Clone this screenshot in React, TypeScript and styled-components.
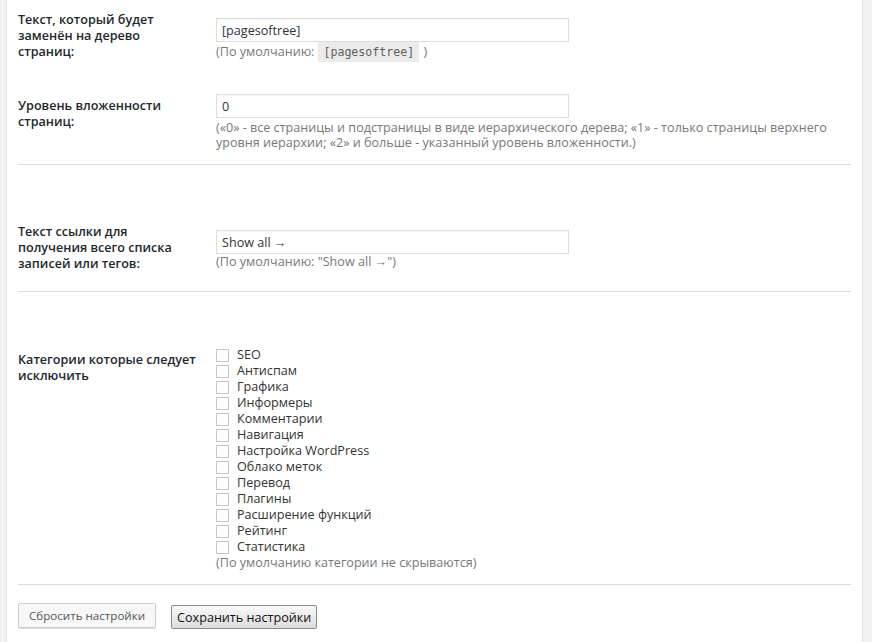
import React from "react";
import styled, { createGlobalStyle } from "styled-components";

const Global = createGlobalStyle`
  html, body {
    margin: 0;
    padding: 0;
    background: #f1f1f1;
  }
  body {
    font-family: "Open Sans", "Noto Sans", sans-serif;
    font-size: 12.6px;
    color: #444;
  }
`;

const Page = styled.div`
  display: flex;
  width: 872px;
  min-height: 642px;
  padding-left: 6px;
  box-sizing: border-box;
`;

const Panel = styled.main`
  width: 857px;
  box-sizing: border-box;
  background: #fff;
  border-left: 1px solid #e4e4e4;
  border-right: 1px solid #e4e4e4;
  padding: 0 11px;
`;

const Row = styled.div<{ $pt: number }>`
  display: grid;
  grid-template-columns: 198px 1fr;
  padding-top: ${(p) => p.$pt}px;
`;

const Label = styled.div<{ $offset?: number }>`
  margin-top: ${(p) => p.$offset ?? 0}px;
  font-weight: 600;
  font-size: 12.6px;
  line-height: 16px;
  color: #23282d;
  white-space: nowrap;
`;

const Field = styled.div<{ $offset?: number }>`
  margin-top: ${(p) => p.$offset ?? 0}px;
  display: flex;
  flex-direction: column;
  align-items: flex-start;
`;

const TextInput = styled.input`
  width: 353px;
  height: 24px;
  box-sizing: border-box;
  margin: 0;
  padding: 0 5px;
  border: 1px solid #dddddd;
  box-shadow: inset 0 1px 2px rgba(0, 0, 0, 0.04);
  font-family: "Open Sans", "Noto Sans", sans-serif;
  font-size: 12.6px;
  color: #333;
  background: #fff;
  outline: none;
`;

const Description = styled.div<{ $mt?: number }>`
  margin-top: ${(p) => p.$mt ?? 0}px;
  font-size: 12.6px;
  line-height: 15px;
  color: #787878;
  white-space: nowrap;
`;

const Code = styled.code`
  font-family: "DejaVu Sans Mono", "Liberation Mono", monospace;
  font-size: 11.6px;
  line-height: 0;
  color: #5e5e5e;
  background: #ebebeb;
  padding: 3px 5px 3px;
  margin: 0 1px 0 4px;
`;

const Divider = styled.div<{ $mt: number }>`
  margin-top: ${(p) => p.$mt}px;
  height: 1px;
  background: #dcdcdc;
`;

const CheckList = styled.div`
  display: flex;
  flex-direction: column;
`;

const CheckRow = styled.label`
  display: flex;
  align-items: center;
  height: 16px;
  line-height: 16px;
  font-size: 12.6px;
  color: #333;
`;

const Box = styled.input`
  appearance: none;
  -webkit-appearance: none;
  width: 13px;
  height: 13px;
  box-sizing: border-box;
  margin: 0 8px 0 0;
  border: 1px solid #c8c8c8;
  background: #fff;
  border-radius: 0;
`;

const Buttons = styled.div`
  display: flex;
  align-items: flex-start;
  gap: 15px;
  padding-top: 18px;
`;

const ResetButton = styled.button`
  height: 25px;
  padding: 0 10px;
  margin: 0;
  box-sizing: border-box;
  font-family: "Open Sans", "Noto Sans", sans-serif;
  font-size: 11.6px;
  color: #555;
  background: #f7f7f7;
  border: 1px solid #cccccc;
  border-radius: 2px;
  box-shadow: 0 1px 0 #dedede;
`;

const SaveButton = styled.button`
  height: 24px;
  margin: 2px 0 0;
  padding: 0 5px;
  box-sizing: border-box;
  font-family: "Open Sans", "Noto Sans", sans-serif;
  font-size: 12.6px;
  color: #111;
  background: linear-gradient(#f9f9f9, #dcdcdc);
  border: 1px solid #8a8a8a;
  border-radius: 2px;
`;

const categories = [
  "SEO",
  "Антиспам",
  "Графика",
  "Информеры",
  "Комментарии",
  "Навигация",
  "Настройка WordPress",
  "Облако меток",
  "Перевод",
  "Плагины",
  "Расширение функций",
  "Рейтинг",
  "Статистика",
];

export default function App() {
  return (
    <>
      <Global />
      <Page>
        <Panel>
          <Row $pt={12}>
            <Label>
              Текст, который будет
              <br />
              заменён на дерево
              <br />
              страниц:
            </Label>
            <Field $offset={6}>
              <TextInput defaultValue="[pagesoftree]" />
              <Description $mt={2}>
                (По умолчанию:<Code>[pagesoftree]</Code> )
              </Description>
            </Field>
          </Row>

          <Row $pt={34}>
            <Label $offset={4}>
              Уровень вложенности
              <br />
              страниц:
            </Label>
            <Field>
              <TextInput defaultValue="0" />
              <Description $mt={2}>
                («0» - все страницы и подстраницы в виде иерархического дерева; «1» - только страницы верхнего
                <br />
                уровня иерархии; «2» и больше - указанный уровень вложенности.)
              </Description>
            </Field>
          </Row>

          <Divider $mt={14} />

          <Row $pt={59}>
            <Label>
              Текст ссылки для
              <br />
              получения всего списка
              <br />
              записей или тегов:
            </Label>
            <Field $offset={6}>
              <TextInput defaultValue="Show all →" />
              <Description>(По умолчанию: "Show all →")</Description>
            </Field>
          </Row>

          <Divider $mt={19} />

          <Row $pt={55}>
            <Label $offset={5}>
              Категории которые следует
              <br />
              исключить
            </Label>
            <Field>
              <CheckList>
                {categories.map((c) => (
                  <CheckRow key={c}>
                    <Box type="checkbox" />
                    {c}
                  </CheckRow>
                ))}
              </CheckList>
              <Description>(По умолчанию категории не скрываются)</Description>
            </Field>
          </Row>

          <Divider $mt={14} />

          <Buttons>
            <ResetButton>Сбросить настройки</ResetButton>
            <SaveButton>Сохранить настройки</SaveButton>
          </Buttons>
        </Panel>
      </Page>
    </>
  );
}
